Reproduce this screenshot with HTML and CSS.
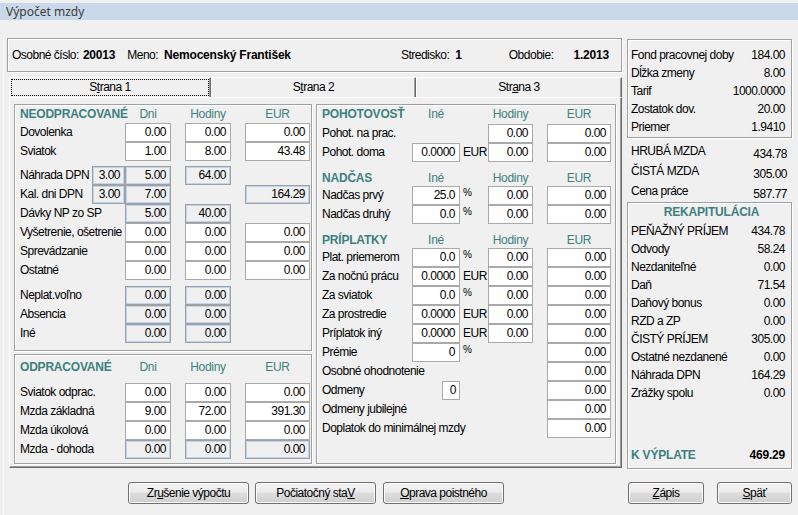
FILE: index.html
```html
<!DOCTYPE html>
<html lang="sk">
<head>
<meta charset="utf-8">
<title>Výpočet mzdy</title>
<link rel="stylesheet" href="styles.css">
</head>
<body>
<div class="titlebar">Výpočet mzdy</div>
<div class="window">
  <div class="main">
    <div class="leftcol">
      <div class="infobar">
        <span>Osobné číslo:</span><b class="v v-id">20013</b>
        <span class="k-meno">Meno:</span><b class="v v-name">Nemocenský František</b>
        <span class="k-str">Stredisko:</span><b class="v v-str">1</b>
        <span class="k-obd">Obdobie:</span><b class="v v-obd">1.2013</b>
      </div>
      <div class="tabctl">
        <div class="tabstrip">
          <div class="tab tab1"><span class="focus">S<u>t</u>rana 1</span></div>
          <div class="tab tab2">S<u>t</u>rana 2</div>
          <div class="tab tab3">Str<u>a</u>na 3</div>
        </div>
        <div class="page">
          <div class="pcol">
            <div class="grp g1">
              <div class="hrow"><span class="ttl">NEODPRACOVANÉ</span><span class="ch c3">Dni</span><span class="ch c5">Hodiny</span><span class="ch c7">EUR</span></div>
              <div class="row"><span class="lbl">Dovolenka</span><span class="f c3">0.00</span><span class="f c5">0.00</span><span class="f c7">0.00</span></div>
              <div class="row"><span class="lbl">Sviatok</span><span class="f c3">1.00</span><span class="f c5">8.00</span><span class="f c7">43.48</span></div>
              <div class="row mt5"><span class="lbl">Náhrada DPN</span><span class="f ro c2">3.00</span><span class="f ro c3">5.00</span><span class="f ro c5">64.00</span></div>
              <div class="row"><span class="lbl">Kal. dni DPN</span><span class="f ro c2">3.00</span><span class="f ro c3">7.00</span><span class="f ro c7">164.29</span></div>
              <div class="row"><span class="lbl">Dávky NP zo SP</span><span class="f ro c3">5.00</span><span class="f ro c5">40.00</span></div>
              <div class="row"><span class="lbl">Vyšetrenie, ošetrenie</span><span class="f c3">0.00</span><span class="f c5">0.00</span><span class="f c7">0.00</span></div>
              <div class="row"><span class="lbl">Sprevádzanie</span><span class="f c3">0.00</span><span class="f c5">0.00</span><span class="f c7">0.00</span></div>
              <div class="row"><span class="lbl">Ostatné</span><span class="f c3">0.00</span><span class="f c5">0.00</span><span class="f c7">0.00</span></div>
              <div class="row mt6"><span class="lbl">Neplat.voľno</span><span class="f ro c3">0.00</span><span class="f ro c5">0.00</span></div>
              <div class="row"><span class="lbl">Absencia</span><span class="f ro c3">0.00</span><span class="f ro c5">0.00</span></div>
              <div class="row"><span class="lbl">Iné</span><span class="f ro c3">0.00</span><span class="f ro c5">0.00</span></div>
            </div>
            <div class="grp g2">
              <div class="hrow"><span class="ttl">ODPRACOVANÉ</span><span class="ch c3">Dni</span><span class="ch c5">Hodiny</span><span class="ch c7">EUR</span></div>
              <div class="row"><span class="lbl">Sviatok odprac.</span><span class="f c3">0.00</span><span class="f c5">0.00</span><span class="f c7">0.00</span></div>
              <div class="row"><span class="lbl">Mzda základná</span><span class="f c3">9.00</span><span class="f c5">72.00</span><span class="f c7">391.30</span></div>
              <div class="row"><span class="lbl">Mzda úkolová</span><span class="f c3">0.00</span><span class="f c5">0.00</span><span class="f c7">0.00</span></div>
              <div class="row"><span class="lbl">Mzda - dohoda</span><span class="f ro c3">0.00</span><span class="f ro c5">0.00</span><span class="f ro c7">0.00</span></div>
            </div>
          </div>
          <div class="grp g3">
            <div class="hrow"><span class="ttl">POHOTOVOSŤ</span><span class="ch c2">Iné</span><span class="ch c4">Hodiny</span><span class="ch c6">EUR</span></div>
            <div class="row"><span class="lbl">Pohot. na prac.</span><span class="f c4">0.00</span><span class="f c6">0.00</span></div>
            <div class="row"><span class="lbl">Pohot. doma</span><span class="f c2">0.0000</span><span class="u">EUR</span><span class="f c4">0.00</span><span class="f c6">0.00</span></div>
            <div class="hrow next"><span class="ttl">NADČAS</span><span class="ch c2">Iné</span><span class="ch c4">Hodiny</span><span class="ch c6">EUR</span></div>
            <div class="row"><span class="lbl">Nadčas prvý</span><span class="f c2">25.0</span><span class="u pct">%</span><span class="f c4">0.00</span><span class="f c6">0.00</span></div>
            <div class="row"><span class="lbl">Nadčas druhý</span><span class="f c2">0.0</span><span class="u pct">%</span><span class="f c4">0.00</span><span class="f c6">0.00</span></div>
            <div class="hrow next"><span class="ttl">PRÍPLATKY</span><span class="ch c2">Iné</span><span class="ch c4">Hodiny</span><span class="ch c6">EUR</span></div>
            <div class="row"><span class="lbl">Plat. priemerom</span><span class="f c2">0.0</span><span class="u pct">%</span><span class="f c4">0.00</span><span class="f c6">0.00</span></div>
            <div class="row"><span class="lbl">Za nočnú prácu</span><span class="f c2">0.0000</span><span class="u">EUR</span><span class="f c4">0.00</span><span class="f c6">0.00</span></div>
            <div class="row"><span class="lbl">Za sviatok</span><span class="f c2">0.0</span><span class="u pct">%</span><span class="f c4">0.00</span><span class="f c6">0.00</span></div>
            <div class="row"><span class="lbl">Za prostredie</span><span class="f c2">0.0000</span><span class="u">EUR</span><span class="f c4">0.00</span><span class="f c6">0.00</span></div>
            <div class="row"><span class="lbl">Príplatok iný</span><span class="f c2">0.0000</span><span class="u">EUR</span><span class="f c4">0.00</span><span class="f c6">0.00</span></div>
            <div class="row"><span class="lbl">Prémie</span><span class="f c2">0</span><span class="u pct">%</span><span class="f c6">0.00</span></div>
            <div class="row"><span class="lbl">Osobné ohodnotenie</span><span class="f c6">0.00</span></div>
            <div class="row"><span class="lbl">Odmeny</span><span class="f sm c2">0</span><span class="f c6">0.00</span></div>
            <div class="row"><span class="lbl">Odmeny jubilejné</span><span class="f c6">0.00</span></div>
            <div class="row"><span class="lbl">Doplatok do minimálnej mzdy</span><span class="f c6">0.00</span></div>
          </div>
        </div>
      </div>
    </div>
    <div class="rightcol">
      <div class="box box1">
        <div class="kv"><span>Fond pracovnej doby</span><span>184.00</span></div>
        <div class="kv"><span>Dĺžka zmeny</span><span>8.00</span></div>
        <div class="kv"><span>Tarif</span><span>1000.0000</span></div>
        <div class="kv"><span>Zostatok dov.</span><span>20.00</span></div>
        <div class="kv"><span>Priemer</span><span>1.9410</span></div>
      </div>
      <div class="totals">
        <div class="kv"><span>HRUBÁ MZDA</span><span class="lo">434.78</span></div>
        <div class="kv"><span>ČISTÁ MZDA</span><span class="lo">305.00</span></div>
        <div class="kv"><span>Cena práce</span><span class="lo">587.77</span></div>
      </div>
      <div class="box rekap">
        <div class="rtitle">REKAPITULÁCIA</div>
        <div class="kv"><span>PEŇAŽNÝ PRÍJEM</span><span>434.78</span></div>
        <div class="kv"><span>Odvody</span><span>58.24</span></div>
        <div class="kv"><span>Nezdaniteľné</span><span>0.00</span></div>
        <div class="kv"><span>Daň</span><span>71.54</span></div>
        <div class="kv"><span>Daňový bonus</span><span>0.00</span></div>
        <div class="kv"><span>RZD a ZP</span><span>0.00</span></div>
        <div class="kv"><span>ČISTÝ PRÍJEM</span><span>305.00</span></div>
        <div class="kv"><span>Ostatné nezdanené</span><span>0.00</span></div>
        <div class="kv"><span>Náhrada DPN</span><span>164.29</span></div>
        <div class="kv"><span>Zrážky spolu</span><span>0.00</span></div>
        <div class="kv final"><span class="fk">K VÝPLATE</span><span>469.29</span></div>
      </div>
    </div>
  </div>
  <div class="buttons">
    <button class="btn">Zr<u>u</u>šenie výpočtu</button>
    <button class="btn b2">Počiatočný sta<u>V</u></button>
    <button class="btn b3"><u>O</u>prava poistného</button>
    <button class="btn zapis"><u>Z</u>ápis</button>
    <button class="btn spat"><u>S</u>päť</button>
  </div>
</div>
</body>
</html>
```

FILE: styles.css
```css
* { box-sizing: border-box; margin: 0; padding: 0; }
html, body { width: 798px; height: 515px; overflow: hidden; }
body {
  background: #f0f0f0;
  font-family: "Liberation Sans", Arial, sans-serif;
  font-size: 12px;
  letter-spacing: -0.5px;
  color: #000;
}
u { text-decoration: underline; text-underline-offset: 1px; }

.titlebar {
  margin-top: 3px;
  height: 17px;
  background: #cad9e9;
  padding-left: 6px;
  font-family: "Noto Sans", "Open Sans", sans-serif;
  font-size: 12px;
  letter-spacing: 0;
  line-height: 17px;
  color: #3b3b3b;
}

.window {
  margin-left: 3px;
  border-left: 1px solid #fafafa;
  padding-left: 3px;
  height: 495px;
}
.main { display: flex; gap: 5px; margin-top: 18px; }
.leftcol { width: 615px; }

/* header info */
.infobar {
  height: 34px;
  border: 1px solid #a0a0a0;
  box-shadow: inset 1px 1px 0 #fff, 1px 1px 0 #fff;
  display: flex;
  align-items: center;
  padding: 0 12px 0 4px;
  white-space: nowrap;
}
.v { font-size: 12px; letter-spacing: -0.2px; }
.v-id { margin-left: 4px; }
.k-meno { margin-left: 12px; }
.v-name { margin-left: 6px; }
.k-str { margin-left: auto; }
.v-str { margin-left: 6px; }
.k-obd { margin-left: 47px; }
.v-obd { margin-left: 20px; }

/* tabs */
.tabctl { margin: 5px 0 0 2px; width: 613px; }
.tabstrip { display: flex; height: 20px; }
.tab {
  height: 20px;
  border-top: 1px solid #fff;
  border-left: 1px solid #fff;
  border-right: 1px solid #696969;
  box-shadow: inset -1px 0 0 #a0a0a0;
  text-align: center;
  line-height: 19px;
}
.tab1 { width: 202px; display: flex; }
.focus { flex: 1; margin: 1px; border: 1px dotted #000; line-height: 15px; }
.tab2 { width: 205px; }
.tab3 { width: 206px; }

.page {
  height: 371px;
  border-top: 1px solid #fff;
  border-left: 1px solid #fff;
  border-right: 1px solid #696969;
  border-bottom: 1px solid #696969;
  box-shadow: inset -1px -1px 0 #a0a0a0;
  padding: 6px 5px 3px 4px;
  display: flex;
  gap: 4px;
}
.pcol { width: 298px; display: flex; flex-direction: column; gap: 3px; }

.grp {
  border: 1px solid #a0a0a0;
  box-shadow: inset 1px 1px 0 #fff, 1px 1px 0 #fff;
  padding-left: 5px;
}
.g1 { height: 247px; }
.g2 { height: 110px; }
.g3 { width: 300px; height: 360px; }

.row, .hrow { display: grid; white-space: nowrap; }
.row { height: 19px; line-height: 19px; }
.g1 .row, .g1 .hrow, .g2 .row, .g2 .hrow { grid-template-columns: 72px 33px 46px 14px 46px 14px 65px; }
.g3 .row, .g3 .hrow { grid-template-columns: 90px 48px 28px 45px 14px 64px; }
.row > *, .hrow > * { grid-row: 1; }
.mt5 { margin-top: 5px; }
.mt6 { margin-top: 6px; }

.g1 .hrow { height: 18px; line-height: 18px; }
.g2 .hrow { height: 28px; line-height: 24px; }
.g3 .hrow { height: 19px; line-height: 19px; }
.g3 .hrow.next { height: 24px; padding-top: 9px; line-height: 14px; }

.ttl {
  grid-column: 1;
  color: #3d8080;
  font-weight: bold;
  font-size: 12px;
  letter-spacing: -0.2px;
}
.ch { color: #3d8080; text-align: center; letter-spacing: -0.3px; }
.lbl { grid-column: 1; }

.c2 { grid-column: 2; }
.c3 { grid-column: 3; }
.c4 { grid-column: 4; }
.c5 { grid-column: 5; }
.c6 { grid-column: 6; }
.c7 { grid-column: 7; }

.f {
  height: 19px;
  border: 1px solid #a9a9a9;
  background: #fff;
  text-align: right;
  padding-right: 4px;
  line-height: 17px;
}
.f.ro {
  background: #f0f0f0;
  border-color: #a0a0a0;
  box-shadow: inset 0 0 0 1px #bdd5ee;
}
.f.sm { justify-self: end; width: 18px; padding-right: 3px; }
.u { grid-column: 3; padding-left: 3px; }
.u.pct { font-size: 10px; line-height: 14px; }

/* right column */
.rightcol { width: 165px; display: flex; flex-direction: column; white-space: nowrap; }
.box {
  border: 1px solid #a0a0a0;
  box-shadow: inset 1px 1px 0 #fff, 1px 1px 0 #fff;
}
.box1 { margin-top: 1px; height: 99px; padding: 6px 6px 0 3px; }
.kv { display: flex; justify-content: space-between; height: 18px; line-height: 18px; }
.totals { margin-top: 4px; padding: 0 5px 0 4px; }
.totals .kv { height: 20px; line-height: 18px; }
.lo { padding-top: 2px; line-height: 20px; }
.rekap { height: 267px; padding: 0 6px 0 3px; display: flex; flex-direction: column; }
.rtitle {
  height: 19px;
  line-height: 19px;
  text-align: center;
  padding-left: 7px;
  color: #3d8080;
  font-weight: bold;
  font-size: 12px;
  letter-spacing: -0.2px;
}
.final { margin-top: auto; margin-bottom: 4px; font-weight: bold; font-size: 12px; letter-spacing: -0.2px; }
.fk { color: #3d8080; }

/* buttons */
.buttons { display: flex; margin-top: 13px; padding-left: 121px; padding-right: 6px; }
.btn {
  height: 22px;
  width: 121px;
  border: 1px solid #707070;
  border-radius: 3px;
  background: linear-gradient(#f2f2f2 0%, #ebebeb 45%, #dddddd 50%, #cfcfcf 100%);
  box-shadow: inset 0 0 0 1px #fbfbfb;
  font: inherit;
  letter-spacing: inherit;
  color: #000;
  text-align: center;
  line-height: 20px;
}
.b2 { margin-left: 6px; }
.b3 { margin-left: 7px; }
.zapis { margin-left: auto; width: 76px; }
.spat { margin-left: 13px; width: 75px; }
```
